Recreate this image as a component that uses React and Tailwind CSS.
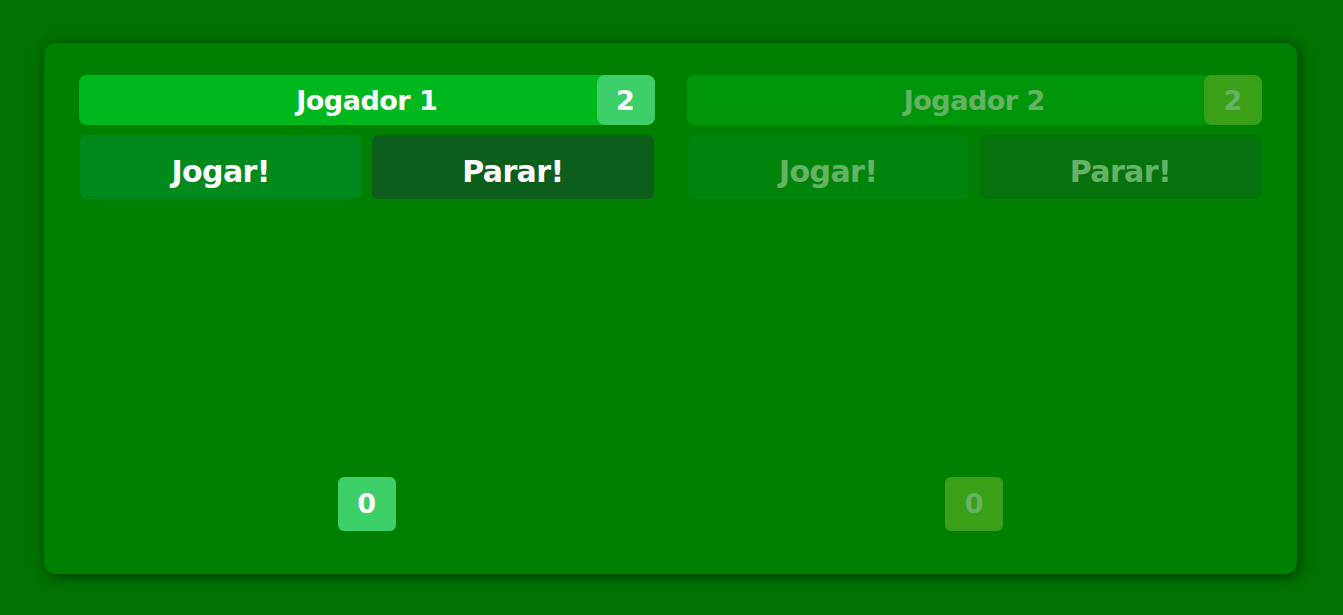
import React from "react";

const FONT = { fontFamily: "'DejaVu Sans', 'Open Sans', sans-serif" };

function Player({ name, score, points, faded }) {
  const badge = faded ? "bg-[#8fd23a]" : "bg-[#3ccf6a]";
  return (
    <div className={`flex flex-col ${faded ? "opacity-40" : ""}`}>
      <div className="relative flex h-[50px] items-center justify-center rounded-[8px] bg-[#00b81e] pt-[2px]">
        <span className="text-[27px] font-bold tracking-[-0.5px] text-white">{name}</span>
        <span className={`absolute right-0 top-0 flex h-[50px] w-[58px] items-center justify-center rounded-[8px] pt-[2px] text-[27px] font-bold text-white ${badge}`}>
          {score}
        </span>
      </div>
      <div className="mt-[10px] grid grid-cols-2 gap-[11px] px-px">
        <button className="h-[64px] rounded-[6px] bg-[#008a1e] pt-[8px] text-[30px] font-bold tracking-[-0.6px] text-white">Jogar!</button>
        <button className="h-[64px] rounded-[6px] bg-[#0d5e1c] pt-[8px] text-[30px] font-bold tracking-[-0.6px] text-white">Parar!</button>
      </div>
      <div className="flex flex-1 items-end justify-center">
        <span className={`flex h-[54px] w-[58px] items-center justify-center rounded-[6px] text-[27px] font-bold text-white ${badge}`}>
          {points}
        </span>
      </div>
    </div>
  );
}

export default function App() {
  return (
    <div className="flex h-screen bg-[#007300] pb-[41px] pl-[44px] pr-[46px] pt-[43px]" style={FONT}>
      <div className="grid flex-1 grid-cols-2 gap-[32px] rounded-[12px] bg-[#008000] px-[35px] pb-[43px] pt-[32px] shadow-[2px_2px_14px_rgba(0,0,0,0.55)]">
        <Player name="Jogador 1" score={2} points={0} />
        <Player name="Jogador 2" score={2} points={0} faded />
      </div>
    </div>
  );
}
